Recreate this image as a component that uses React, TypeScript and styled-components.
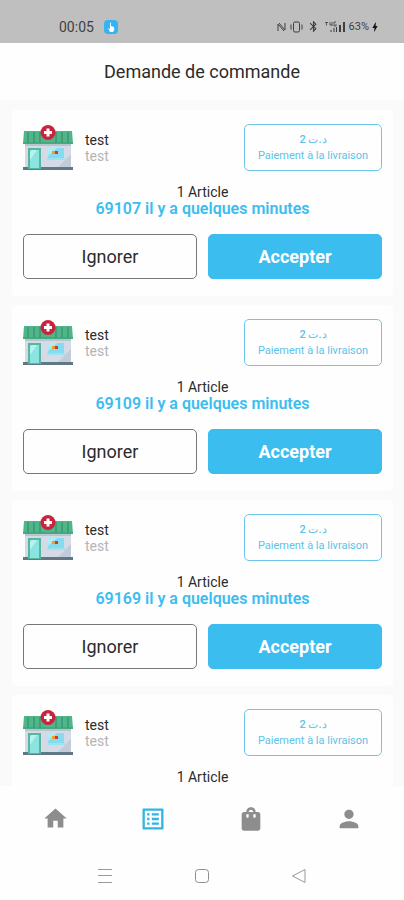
import React from "react";
import styled, { createGlobalStyle } from "styled-components";
import { MdBluetooth, MdBolt, MdHome, MdListAlt, MdPerson, MdShoppingBag } from "react-icons/md";

const accent = "#3cbdf0";

const GlobalStyle = createGlobalStyle`
  *, *::before, *::after { box-sizing: border-box; }
  body { margin: 0; background: #fff; }
  body, button { font-family: Roboto, "Noto Sans", "Liberation Sans", sans-serif; }
`;

const Screen = styled.div`
  display: flex;
  flex-direction: column;
  height: 100vh;
  background: #fefefe;
  color: #2b2b2b;
`;

const StatusBar = styled.div`
  flex: none;
  display: flex;
  align-items: center;
  justify-content: space-between;
  height: 43px;
  padding: 10px 23px 0 59px;
  background: #bfbfbf;
  color: #3f3f3f;
`;

const Clock = styled.div`
  display: flex;
  align-items: center;
  gap: 10px;
  font-size: 14px;
  line-height: 16px;
`;

const StatusIcons = styled.div`
  display: flex;
  align-items: center;
  font-size: 11px;
  line-height: 16px;
  svg { display: block; }
`;

const IconGroup = styled.div`
  display: flex;
  align-items: center;
  gap: 4px;
  margin-right: 3px;
`;

const Header = styled.header`
  flex: none;
  display: flex;
  align-items: center;
  justify-content: center;
  height: 57px;
`;

const Title = styled.h1`
  margin: 0;
  font-size: 18px;
  line-height: 24px;
  font-weight: 400;
`;

const OrderList = styled.main`
  flex: 1;
  min-height: 0;
  display: flex;
  flex-direction: column;
  gap: 9px;
  padding: 10px 11px 10px 12px;
  overflow-y: auto;
  scrollbar-width: none;
  background: #fafafa;
`;

const Card = styled.article`
  flex: none;
  padding: 14px 11px 17px;
  border-radius: 4px;
  background: #fefefe;
`;

const Top = styled.div`
  display: flex;
  align-items: flex-start;
  height: 48px;
`;

const Names = styled.div`
  flex: 1;
  padding: 8px 0 0 12px;
  font-size: 14px;
  line-height: 16px;
`;

const Address = styled.div`
  color: #b4b4b4;
`;

const Payment = styled.div`
  display: flex;
  flex-direction: column;
  align-items: center;
  justify-content: center;
  width: 138px;
  height: 47px;
  border: 1px solid #6cc7ea;
  border-radius: 5px;
  color: #5cc2e9;
  font-size: 11px;
  line-height: 16px;
`;

const Price = styled.span`
  font-weight: 500;
`;

const Summary = styled.div`
  margin: 12px 0 16px;
  text-align: center;
  font-size: 14px;
  line-height: 16px;
`;

const Reference = styled.div`
  color: ${accent};
  font-size: 16px;
  line-height: 18px;
  font-weight: 600;
`;

const Actions = styled.div`
  display: grid;
  grid-template-columns: 1fr 1fr;
  gap: 11px;
`;

const Action = styled.button<{ $primary?: boolean }>`
  height: 45px;
  padding: 0;
  border: 1px solid ${(p) => (p.$primary ? accent : "#777")};
  border-radius: 5px;
  background: ${(p) => (p.$primary ? accent : "#fefefe")};
  color: ${(p) => (p.$primary ? "#fff" : "#2b2b2b")};
  font-size: 18px;
  line-height: 24px;
  font-weight: ${(p) => (p.$primary ? 700 : 400)};
`;

const TabBar = styled.nav`
  flex: none;
  display: grid;
  grid-template-columns: repeat(4, 1fr);
  height: 65px;
  padding: 0 6px;
`;

const Tab = styled.button<{ $active?: boolean }>`
  display: flex;
  align-items: center;
  justify-content: center;
  padding: 0;
  border: 0;
  background: none;
  color: ${(p) => (p.$active ? "#32b4e6" : "#8d8d8d")};
`;

const SystemNav = styled.div`
  flex: none;
  display: grid;
  grid-template-columns: repeat(3, 1fr);
  height: 49px;
  padding: 0 57px;
`;

function Pharmacy() {
  return (
    <svg width="50" height="48" viewBox="0 0 50 48" role="img" aria-label="Pharmacie">
      <rect x="2" y="17" width="46" height="26" fill="#d5dbe6" />
      <path d="M2 17h46v5H2z" fill="#b9c4d1" />
      <path d="M48 30v13H35z" fill="#c3cad8" />
      <rect x="0" y="43" width="50" height="3" fill="#607787" />
      <rect x="5" y="24" width="13" height="21" fill="#56b79b" />
      <rect x="7" y="26" width="9" height="18" fill="#8be4e2" />
      <path d="M9 26h5l-7 10v-8z" fill="#b5f3ef" />
      <rect x="25" y="24" width="16" height="11" fill="#87dbef" />
      <path d="M25 24h9l-9 8z" fill="#b1ecf6" />
      <rect x="24" y="34" width="18" height="2" fill="#9be3f2" />
      <rect x="29" y="27" width="4" height="3" fill="#ef9b2f" />
      <rect x="32" y="27" width="3" height="3" fill="#bf4138" />
      <path d="M1 7h48l1 13H0z" fill="#50b68a" />
      <path d="M5 8v11M11 8v11M17 8v11M33 8v11M39 8v11M45 8v11" stroke="#3f9f78" strokeWidth="2" />
      <path d="M0 19h50" stroke="#3e9d77" strokeWidth="1" />
      <circle cx="25" cy="8.500" r="7.500" fill="#c9243d" />
      <path d="M25 4.500v8M21 8.500h8" stroke="#fff" strokeWidth="3" />
    </svg>
  );
}

function AppBadge() {
  return (
    <svg width="14" height="14" viewBox="0 0 14 14" aria-hidden="true">
      <rect width="14" height="14" rx="4" fill="#35b4f4" />
      <path d="M6 3q1-1 1 0v3l3 1q1 3-1 5H6L4 8l2 1z" fill="#fff" />
    </svg>
  );
}

function NfcIcon() {
  return (
    <svg width="9" height="10" viewBox="0 0 9 10" fill="none" stroke="currentColor" aria-hidden="true">
      <path d="M1 9V2l6 7M2 1l6 7V1" />
    </svg>
  );
}

function VibrateIcon() {
  return (
    <svg width="13" height="12" viewBox="0 0 13 12" fill="none" stroke="currentColor" aria-hidden="true">
      <rect x="3.5" y="1" width="6" height="10" rx="1.5" />
      <path d="M1 3.500v5M12 3.500v5" />
    </svg>
  );
}

function SignalIcon() {
  return (
    <svg width="22" height="12" viewBox="0 0 22 12" fill="none" stroke="currentColor" aria-hidden="true">
      <path d="M1 1.500h3M2.500 1.500v3M6 1v3h2M8 1v4M10 1v4h2V3M10 1h2" strokeWidth="0.8" />
      <path d="M7 11V9M10 11V7M12.500 11V6" />
      <path d="M16 11V4M20 11V1" strokeWidth="2" />
    </svg>
  );
}

const orders = [
  { id: 1, reference: "69107" },
  { id: 2, reference: "69109" },
  { id: 3, reference: "69169" },
  { id: 4, reference: "69170" },
];

function Order({ reference }: { reference: string }) {
  return (
    <Card>
      <Top>
        <Pharmacy />
        <Names>
          <div>test</div>
          <Address>test</Address>
        </Names>
        <Payment>
          <Price>2 د.ت</Price>
          <span>Paiement à la livraison</span>
        </Payment>
      </Top>
      <Summary>
        <div>1 Article</div>
        <Reference>{reference} il y a quelques minutes</Reference>
      </Summary>
      <Actions>
        <Action type="button">Ignorer</Action>
        <Action type="button" $primary>Accepter</Action>
      </Actions>
    </Card>
  );
}

export default function App() {
  return (
    <Screen>
      <GlobalStyle />
      <StatusBar>
        <Clock>
          <span>00:05</span>
          <AppBadge />
        </Clock>
        <StatusIcons>
          <IconGroup>
            <NfcIcon />
            <VibrateIcon />
            <MdBluetooth size={13} />
            <SignalIcon />
          </IconGroup>
          <span>63%</span>
          <MdBolt size={12} color="#111" />
        </StatusIcons>
      </StatusBar>
      <Header>
        <Title>Demande de commande</Title>
      </Header>
      <OrderList>
        {orders.map((order) => (
          <Order key={order.id} reference={order.reference} />
        ))}
      </OrderList>
      <TabBar>
        <Tab type="button" aria-label="Accueil"><MdHome size={27} /></Tab>
        <Tab type="button" aria-label="Commandes" $active><MdListAlt size={28} /></Tab>
        <Tab type="button" aria-label="Produits"><MdShoppingBag size={28} /></Tab>
        <Tab type="button" aria-label="Profil"><MdPerson size={28} /></Tab>
      </TabBar>
      <SystemNav>
        <Tab type="button" aria-label="Récents">
          <svg width="16" height="16" viewBox="0 0 16 16" fill="none" stroke="#9a9a9a">
            <path d="M1 1.500h14M1 7.500h14M1 14.500h14" />
          </svg>
        </Tab>
        <Tab type="button" aria-label="Écran d'accueil">
          <svg width="16" height="16" viewBox="0 0 16 16" fill="none" stroke="#8d8d8d">
            <rect x="1.500" y="1.500" width="13" height="13" rx="3" />
          </svg>
        </Tab>
        <Tab type="button" aria-label="Retour">
          <svg width="16" height="16" viewBox="0 0 16 16" fill="none" stroke="#9a9a9a" strokeLinejoin="round">
            <path d="M1.500 8L14 1.500v13z" />
          </svg>
        </Tab>
      </SystemNav>
    </Screen>
  );
}
